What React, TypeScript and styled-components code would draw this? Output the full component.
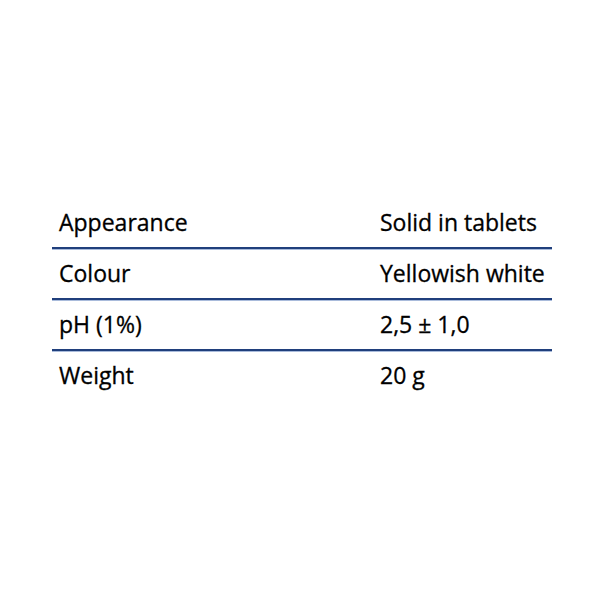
import styled, { createGlobalStyle } from 'styled-components';

const GlobalStyle = createGlobalStyle`
  html, body {
    margin: 0;
    padding: 0;
    background: #ffffff;
  }
`;

const Page = styled.div`
  width: 603px;
  height: 603px;
  padding-top: 198px;
  padding-left: 52px;
  box-sizing: border-box;
`;

const Table = styled.div`
  width: 500px;
  font-family: 'Open Sans', 'Liberation Sans', sans-serif;
  font-size: 23px;
  color: #000000;
  -webkit-text-stroke: 0.3px #000000;
`;

const Row = styled.div<{ $divider: boolean }>`
  display: grid;
  grid-template-columns: 321px 1fr;
  align-items: center;
  height: 49px;
  padding-left: 7px;
  border-bottom: 2px solid ${(p) => (p.$divider ? '#203f7c' : 'transparent')};
  box-shadow: ${(p) => (p.$divider ? '0 1px 0 #a9bbdb' : 'none')};
  white-space: nowrap;
`;

const Cell = styled.span`
  line-height: 1;
`;

const rows = [
  ['Appearance', 'Solid in tablets'],
  ['Colour', 'Yellowish white'],
  ['pH (1%)', '2,5 ± 1,0'],
  ['Weight', '20 g'],
];

const App = () => {
  return (
    <>
      <GlobalStyle />
      <Page>
        <Table>
          {rows.map(([label, value], i) => (
            <Row key={label} $divider={i < rows.length - 1}>
              <Cell>{label}</Cell>
              <Cell>{value}</Cell>
            </Row>
          ))}
        </Table>
      </Page>
    </>
  );
};

export default App;
